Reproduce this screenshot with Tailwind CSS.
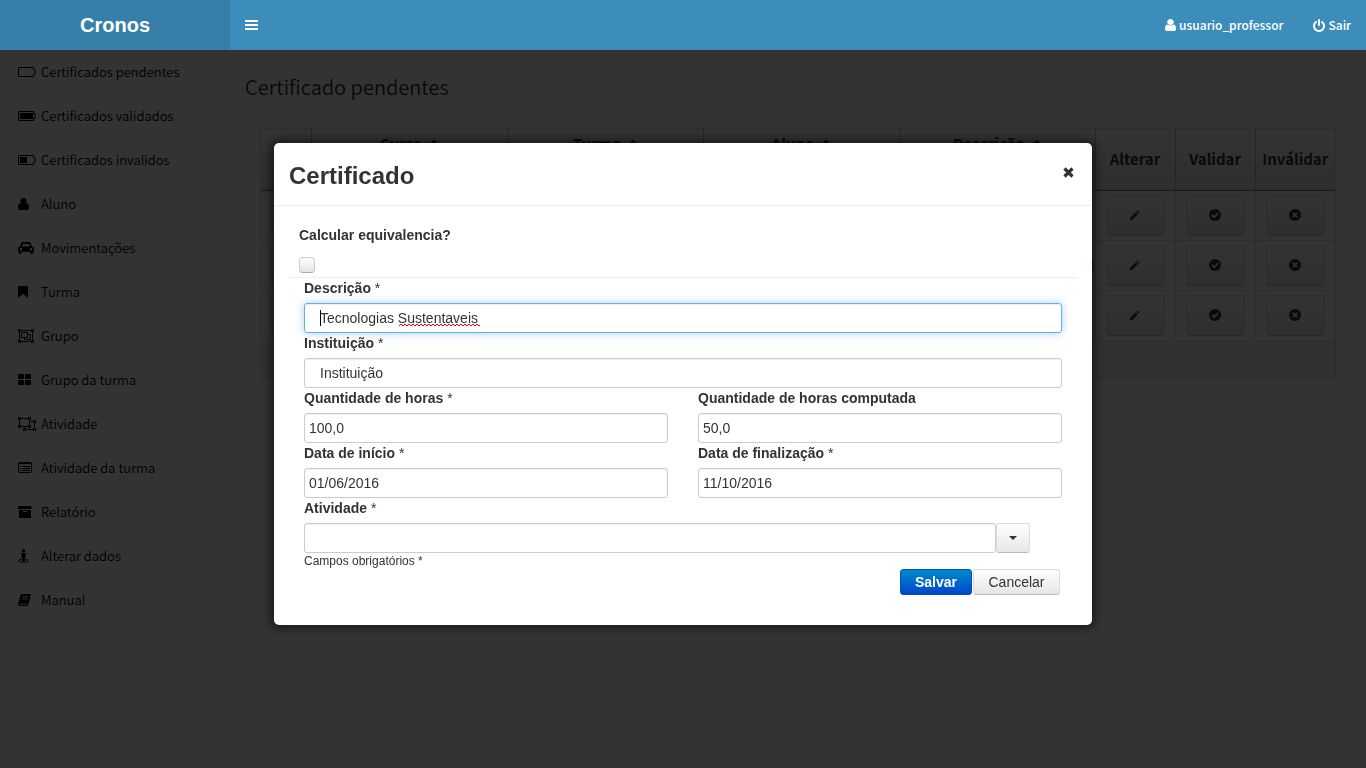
<!DOCTYPE html>
<html lang="pt-BR">
<head>
<meta charset="utf-8">
<meta name="viewport" content="width=device-width, initial-scale=1">
<title>Cronos</title>
<script src="https://cdn.jsdelivr.net/npm/@tailwindcss/browser@4"></script>
</head>
<body class="min-h-screen bg-white font-['Noto_Sans_CJK_SC','Noto_Sans',sans-serif] text-[13px] text-[#333]">

<header class="relative z-20 flex h-[50px] bg-[#3c8dbc] text-white">
  <a href="#" class="flex w-[230px] items-center justify-center bg-[#367fa9] font-['Liberation_Sans',sans-serif] text-xl font-bold">Cronos</a>
  <nav class="flex flex-1 items-center justify-between">
    <button type="button" aria-label="Alternar menu" class="px-[15px]">
      <svg class="h-[10px] w-[13px]" viewBox="0 0 13 10" fill="currentColor"><path d="M0 0h13v2H0zM0 4h13v2H0zM0 8h13v2H0z"/></svg>
    </button>
    <div class="flex gap-[30px] pr-[15px] text-xs font-medium">
      <a href="#" class="flex items-center gap-[3px]"><svg class="h-3 w-[11px]" viewBox="256 128 1280 1536" preserveAspectRatio="none" fill="currentColor"><path d="M1536 1399q0 109-62.5 187t-150.5 78h-854q-88 0-150.5-78t-62.5-187q0-85 8.5-160.5t31.5-152 58.5-131 94-89 134.5-34.5q131 128 313 128t313-128q76 0 134.5 34.5t94 89 58.5 131 31.5 152 8.5 160.5zm-256-887q0 159-112.5 271.5t-271.500 112.500-271.500-112.500-112.500-271.500 112.500-271.500 271.500-112.500 271.500 112.500 112.500 271.500z"/></svg>usuario_professor</a>
      <a href="#" class="flex items-center gap-[3px]"><svg class="h-[13px] w-3" viewBox="128 0 1536 1664" fill="currentColor"><path d="M1664 896q0 156-61 298t-164 245-245 164-298 61-298-61-245-164-164-245-61-298q0-182 80.5-343t226.5-270q43-32 95.5-25t83.5 50q32 42 24.5 94.5t-49.5 84.5q-98 74-151.5 181t-53.5 228q0 104 40.5 198.5t109.5 163.5 163.5 109.5 198.5 40.5 198.5-40.5 163.5-109.5 109.5-163.5 40.5-198.5q0-121-53.5-228t-151.5-181q-42-32-49.5-84.5t24.5-94.5q31-43 84-50t95 25q146 109 226.5 270t80.5 343zm-640-768v640q0 52-38 90t-90 38-90-38-38-90v-640q0-52 38-90t90-38 90 38 38 90z"/></svg>Sair</a>
    </div>
  </nav>
</header>

<div class="flex">
  <aside class="w-[230px] shrink-0">
    <nav class="flex flex-col font-[350] text-black">
      <a href="#" class="flex h-11 items-center gap-[5px] pl-[18px]"><svg class="h-[14px] w-[18px]" viewBox="0 0 18 14" fill="none" stroke="currentColor"><path d="M1.500 2.500h14v2h1.500v5h-1.500v2h-15v-9z"/></svg>Certificados pendentes</a>
      <a href="#" class="flex h-11 items-center gap-[5px] pl-[18px]"><svg class="h-[14px] w-[18px]" viewBox="0 0 18 14" fill="none" stroke="currentColor"><path d="M1.500 2.500h14v2h1.500v5h-1.500v2h-15v-9z"/><path d="M2 4h13v6H2z" fill="currentColor" stroke="none"/></svg>Certificados validados</a>
      <a href="#" class="flex h-11 items-center gap-[5px] pl-[18px]"><svg class="h-[14px] w-[18px]" viewBox="0 0 18 14" fill="none" stroke="currentColor"><path d="M1.500 2.500h14v2h1.500v5h-1.500v2h-15v-9z"/><path d="M2 4h7v6H2z" fill="currentColor" stroke="none"/></svg>Certificados invalidos</a>
      <a href="#" class="flex h-11 items-center gap-[5px] pl-[18px]"><svg class="h-[14px] w-[18px]" viewBox="0 0 18 14" fill="currentColor"><circle cx="5.500" cy="4" r="3.100"/><path d="M0 10.500C0 8 .8 6.200 2.800 6.200c1.500 1.400 3.900 1.400 5.400 0 2 0 2.800 1.800 2.800 4.300 0 1.500-.8 2.500-1.800 2.500H1.800C.8 13 0 12 0 10.500z"/></svg>Aluno</a>
      <a href="#" class="flex h-11 items-center gap-[5px] pl-[18px]"><svg class="h-[14px] w-[18px]" viewBox="0 0 18 14" fill="currentColor" fill-rule="evenodd"><path d="M2.200 5.500 3.200 2.300C3.500 1.400 4 1 5 1h6c1 0 1.500.4 1.800 1.300l1 3.200C15.200 5.500 16 6.300 16 7.500v3.300h-1v1c0 1.600-2.500 1.600-2.500 0v-1h-9v1c0 1.600-2.500 1.600-2.500 0v-1H0V7.500c0-1.200.8-2 2.200-2zM4 5.500h8l-.8-2.800H4.800zM3 7a1.300 1.300 0 1 0 0 2.600A1.300 1.300 0 0 0 3 7zm10 0a1.300 1.300 0 1 0 0 2.600A1.300 1.300 0 0 0 13 7z"/></svg>Movimentações</a>
      <a href="#" class="flex h-11 items-center gap-[5px] pl-[18px]"><svg class="h-[14px] w-[18px]" viewBox="0 0 18 14" fill="currentColor"><path d="M1 1h8q1 0 1 1v11L5 8.800 0 13V2q0-1 1-1z"/></svg>Turma</a>
      <a href="#" class="flex h-11 items-center gap-[5px] pl-[18px]"><svg class="h-[14px] w-[18px]" viewBox="0 0 18 14" fill="none" stroke="currentColor"><path d="M3 1.500h10M3 12.500h10M1.500 3v8M14.500 3v8M3.500 3.500h6v5h-6zM9.500 5.500h3v5h-6v-2"/><path d="M.5.5h2v2h-2zM13.500.5h2v2h-2zM.5 11.500h2v2h-2zM13.500 11.500h2v2h-2z"/></svg>Grupo</a>
      <a href="#" class="flex h-11 items-center gap-[5px] pl-[18px]"><svg class="h-[14px] w-[18px]" viewBox="0 0 18 14" fill="currentColor"><rect y="1" width="6" height="5" rx="1"/><rect x="7" y="1" width="6" height="5" rx="1"/><rect y="7" width="6" height="5" rx="1"/><rect x="7" y="7" width="6" height="5" rx="1"/></svg>Grupo da turma</a>
      <a href="#" class="flex h-11 items-center gap-[5px] pl-[18px]"><svg class="h-[14px] w-[18px]" viewBox="0 0 18 14" fill="none" stroke="currentColor"><path d="M3 1.500h8M1.500 3v6M3 9.500h8M11.500 3v6M13 4.500h3M16.500 6v6M8 12.500h8M6.500 10v2"/><path d="M.5.5h2v2h-2zM10.500.5h2v2h-2zM.5 8.500h2v2h-2zM10.500 8.500h2v2h-2zM15.500 3.500h2v2h-2zM15.500 11.500h2v2h-2zM5.500 11.500h2v2h-2z"/></svg>Atividade</a>
      <a href="#" class="flex h-11 items-center gap-[5px] pl-[18px]"><svg class="h-[14px] w-[18px]" viewBox="0 0 18 14" fill="none" stroke="currentColor"><rect x=".5" y="1.500" width="13" height="10" rx="1"/><path d="M0 2.500h14M2 5.500h1m1 0h8M2 7.500h1m1 0h8M2 9.500h1m1 0h8"/></svg>Atividade da turma</a>
      <a href="#" class="flex h-11 items-center gap-[5px] pl-[18px]"><svg class="h-[14px] w-[18px]" viewBox="0 0 18 14" fill="currentColor" fill-rule="evenodd"><path d="M0 1h13.500v3H0zM1 5h12v8H1zM5 6v1h4V6z"/></svg>Relatório</a>
      <a href="#" class="flex h-11 items-center gap-[5px] pl-[18px]"><svg class="h-[14px] w-[18px]" viewBox="0 0 18 14" fill="currentColor"><circle cx="5.500" cy="1.700" r="1.700"/><path d="M3.500 4h4v4.500H7V12H4V8.500h-.5z"/><path d="M3 10.300c-4 .9-2.800 2.900 2.500 2.900s6.500-2 2.500-2.900" fill="none" stroke="currentColor"/></svg>Alterar dados</a>
      <a href="#" class="flex h-11 items-center gap-[5px] pl-[18px]"><svg class="h-[14px] w-[18px]" viewBox="0 0 18 14" fill="currentColor" fill-rule="evenodd"><path d="M4 1h8q1.200.3.800 1.500L10.300 11.500Q9.800 13 8.500 13H2Q0 13 0 11L2.500 2.500Q2.900 1 4 1zM4.700 3.300l-.3 1h5.800l.3-1zM4 5.500l-.3 1h5.800l.3-1zM1.300 10.800q0 1 1 1h6.200l.4-1z"/></svg>Manual</a>
    </nav>
  </aside>

  <main class="min-w-0 flex-1 px-[15px] pt-[22px]">
    <h1 class="h-[37px] border-b border-[#eee] text-xl leading-[30px] font-[350]">Certificado pendentes</h1>
    <div class="mx-[15px] mt-[19px] rounded-b border border-[#ddd] bg-[#f5f5f5]">
      <table class="w-full table-fixed border-collapse bg-white">
        <colgroup><col class="w-[50px]"><col><col><col><col><col class="w-[80px]"><col class="w-[80px]"><col class="w-[80px]"></colgroup>
        <thead class="bg-linear-to-b from-white to-[#e6e6e6] text-[15px] leading-5">
          <tr class="h-[61px] border-b border-[#777]">
            <th></th>
            <th class="border-l border-[#bbb] pt-[5px] align-top"><span class="flex items-center justify-center gap-2">Curso <svg class="size-2" viewBox="0 0 8 8" fill="none" stroke="currentColor" stroke-width="2"><path d="M1 4l3-3 3 3"/></svg></span></th>
            <th class="border-l border-[#bbb] pt-[5px] align-top"><span class="flex items-center justify-center gap-2">Turma <svg class="size-2" viewBox="0 0 8 8" fill="none" stroke="currentColor" stroke-width="2"><path d="M1 4l3-3 3 3"/></svg></span></th>
            <th class="border-l border-[#bbb] pt-[5px] align-top"><span class="flex items-center justify-center gap-2">Aluno <svg class="size-2" viewBox="0 0 8 8" fill="none" stroke="currentColor" stroke-width="2"><path d="M1 4l3-3 3 3"/></svg></span></th>
            <th class="border-l border-[#bbb] pt-[5px] align-top"><span class="flex items-center justify-center gap-2">Descrição <svg class="size-2" viewBox="0 0 8 8" fill="none" stroke="currentColor" stroke-width="2"><path d="M1 4l3-3 3 3"/></svg></span></th>
            <th class="border-l border-[#bbb]">Alterar</th>
            <th class="border-l border-[#bbb]">Validar</th>
            <th class="border-l border-[#bbb]">Inválidar</th>
          </tr>
        </thead>
        <tbody id="rows"></tbody>
      </table>
      <div class="h-[36px]"></div>
    </div>
  </main>
</div>

<template id="row">
  <tr class="h-[50px] border-b border-[#ddd]">
    <td class="pl-[10px]"><button type="button" aria-label="Expandir" class="block h-[41px] w-[30px] rounded border border-[#ddd] bg-linear-to-b from-white to-[#e6e6e6]"></button></td>
    <td class="border-l border-[#ddd]"></td><td class="border-l border-[#ddd]"></td><td class="border-l border-[#ddd]"></td><td class="note border-l border-[#ddd] text-right text-[#f00]"></td>
    <td class="border-l border-[#ddd] px-[10px]"><button type="button" aria-label="Alterar" class="flex h-[41px] w-full items-center justify-center rounded border border-[#ddd] border-b-[#bbb] bg-linear-to-b from-white to-[#e6e6e6]"><svg class="h-[10px] w-[10px]" viewBox="0 0 10 10" fill="#333"><path d="M0 10V8L5.800 2.200l2 2L2 10zM6.500 1.500 7.500.5l2 2-1 1z"/></svg></button></td>
    <td class="border-l border-[#ddd] px-[10px]"><button type="button" aria-label="Validar" class="flex h-[41px] w-full items-center justify-center rounded border border-[#ddd] border-b-[#bbb] bg-linear-to-b from-white to-[#e6e6e6]"><svg class="h-3 w-3" viewBox="0 0 12 12"><circle cx="6" cy="6" r="6" fill="#333"/><path d="M3 6l2.200 2.200L9.200 4" fill="none" stroke="#eee" stroke-width="1.800"/></svg></button></td>
    <td class="border-l border-[#ddd] px-[10px]"><button type="button" aria-label="Inválidar" class="flex h-[41px] w-full items-center justify-center rounded border border-[#ddd] border-b-[#bbb] bg-linear-to-b from-white to-[#e6e6e6]"><svg class="h-3 w-3" viewBox="0 0 12 12"><circle cx="6" cy="6" r="6" fill="#333"/><path d="M3.800 3.800l4.400 4.400M8.200 3.800L3.800 8.200" fill="none" stroke="#eee" stroke-width="1.800"/></svg></button></td>
  </tr>
</template>
<script>
  const rows = document.getElementById('rows');
  ['', 'l', ''].forEach(note => {
    const row = document.getElementById('row').content.cloneNode(true);
    row.querySelector('.note').textContent = note;
    rows.append(row);
  });
</script>

<div class="fixed inset-0 z-10 flex items-center justify-center bg-black/80 font-['Liberation_Sans',sans-serif] text-sm leading-5">
  <section role="dialog" aria-modal="true" aria-labelledby="dlg-title" class="w-full max-w-[818px] rounded-[5px] bg-white shadow-[0_0_12px_2px_#000a]">
    <header class="flex h-[63px] items-center justify-between border-b border-[#eee] pr-[18px] pl-[15px]">
      <h2 id="dlg-title" class="pt-1 text-2xl font-bold">Certificado</h2>
      <button type="button" aria-label="Fechar" class="mb-1"><svg class="h-[11px] w-[11px]" viewBox="0 0 11 11" fill="none" stroke="#333" stroke-width="3.200"><path d="M1.500 1.500l8 8M9.500 1.500l-8 8"/></svg></button>
    </header>
    <form class="px-[15px] pt-[19px] pb-[30px]">
      <div class="border-b border-[#eee] px-[10px] pb-1">
        <label for="calc" class="mb-3 block font-bold">Calcular equivalencia?</label>
        <input id="calc" type="checkbox" class="block size-4 appearance-none rounded border border-[#ccc] border-b-[#aaa] bg-linear-to-b from-white to-[#e4e4e4]">
      </div>
      <div class="grid grid-cols-2 gap-x-[30px] px-[15px]">
        <div class="col-span-2">
          <label for="desc" class="mb-[5px] block font-bold">Descrição <span class="font-normal">*</span></label>
          <div class="relative">
            <input id="desc" type="text" spellcheck="false" value="Tecnologias Sustentaveis" class="block h-[30px] w-full rounded-[3px] border border-[#66afe9] px-[15px] shadow-[0_0_8px_#66afe999,inset_0_1px_1px_#0001] outline-none">
            <span class="absolute top-[7px] left-[16px] h-4 w-px bg-black"></span>
            <svg class="absolute top-[21px] left-[95px] h-[3px] w-[81px]" fill="none" stroke="#f00"><defs><pattern id="wave" width="4" height="3" patternUnits="userSpaceOnUse"><path d="M-1 3l3-3 3 3"/></pattern></defs><rect width="81" height="3" fill="url(#wave)" stroke="none"/></svg>
          </div>
        </div>
        <div class="col-span-2">
          <label for="inst" class="mb-[5px] block font-bold">Instituição <span class="font-normal">*</span></label>
          <input id="inst" type="text" value="Instituição" class="block h-[30px] w-full rounded-[3px] border border-[#ccc] px-[15px] shadow-[inset_0_1px_1px_#0001]">
        </div>
        <div>
          <label for="hours" class="mb-[5px] block font-bold">Quantidade de horas <span class="font-normal">*</span></label>
          <input id="hours" type="text" value="100,0" class="block h-[30px] w-full rounded-[3px] border border-[#ccc] px-1 shadow-[inset_0_1px_1px_#0001]">
        </div>
        <div>
          <label for="counted" class="mb-[5px] block font-bold">Quantidade de horas computada</label>
          <input id="counted" type="text" value="50,0" class="block h-[30px] w-full rounded-[3px] border border-[#ccc] px-1 shadow-[inset_0_1px_1px_#0001]">
        </div>
        <div>
          <label for="start" class="mb-[5px] block font-bold">Data de início <span class="font-normal">*</span></label>
          <input id="start" type="text" value="01/06/2016" class="block h-[30px] w-full rounded-[3px] border border-[#ccc] px-1 shadow-[inset_0_1px_1px_#0001]">
        </div>
        <div>
          <label for="end" class="mb-[5px] block font-bold">Data de finalização <span class="font-normal">*</span></label>
          <input id="end" type="text" value="11/10/2016" class="block h-[30px] w-full rounded-[3px] border border-[#ccc] px-1 shadow-[inset_0_1px_1px_#0001]">
        </div>
        <div class="col-span-2">
          <label for="activity" class="mb-[5px] block font-bold">Atividade <span class="font-normal">*</span></label>
          <div class="flex pr-8">
            <input id="activity" type="text" role="combobox" aria-expanded="false" class="block h-[30px] min-w-0 flex-1 rounded-[3px] border border-[#ccc] px-1 shadow-[inset_0_1px_1px_#0001]">
            <button type="button" aria-label="Abrir lista" class="flex w-[34px] items-center justify-center rounded-[3px] border border-[#ddd] border-b-[#bbb] bg-linear-to-b from-white to-[#e6e6e6]"><svg class="h-1 w-2" viewBox="0 0 8 4" fill="#333"><path d="M0 0h8L4 4z"/></svg></button>
          </div>
        </div>
      </div>
      <p class="px-[15px] text-xs leading-4">Campos obrigatórios *</p>
      <div class="flex justify-end gap-px pr-[17px]">
        <button type="submit" class="h-[26px] w-[72px] rounded-[3px] border border-[#0055b3] bg-linear-to-b from-[#0088cc] to-[#0044cc] font-bold leading-none text-white">Salvar</button>
        <button type="button" class="h-[26px] w-[87px] rounded-[3px] border border-[#ddd] border-b-[#bbb] bg-linear-to-b from-white to-[#e6e6e6] leading-none">Cancelar</button>
      </div>
    </form>
  </section>
</div>
</body>
</html>
